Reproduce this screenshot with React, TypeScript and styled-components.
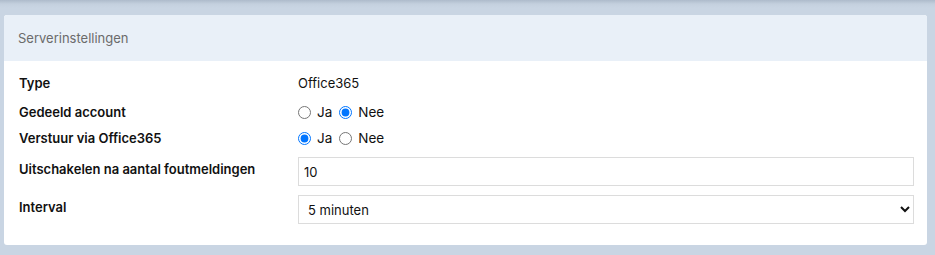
import React from 'react';
import styled, { createGlobalStyle } from 'styled-components';

const GlobalStyle = createGlobalStyle`
  html, body {
    margin: 0;
    padding: 0;
    background: #c9d5e3;
  }

  body {
    font-family: Inter, "Noto Sans", sans-serif;
    color: #111;
  }
`;

const App: React.FC = () => {
  return (
    <>
      <GlobalStyle />
      <Page>
        <Card>
          <CardHeader>Serverinstellingen</CardHeader>
          <CardBody>
            <Row height={26} gapAfter={3}>
              <Label>Type</Label>
              <Value>Office365</Value>
            </Row>
            <Row height={26}>
              <Label>Gedeeld account</Label>
              <Value>
                <RadioLabel>
                  <Radio type="radio" name="shared" />
                  Ja
                </RadioLabel>
                <RadioLabel>
                  <Radio type="radio" name="shared" defaultChecked />
                  Nee
                </RadioLabel>
              </Value>
            </Row>
            <Row height={26} gapAfter={6}>
              <Label>Verstuur via Office365</Label>
              <Value>
                <RadioLabel>
                  <Radio type="radio" name="via" defaultChecked />
                  Ja
                </RadioLabel>
                <RadioLabel>
                  <Radio type="radio" name="via" />
                  Nee
                </RadioLabel>
              </Value>
            </Row>
            <FieldRow gapAfter={9}>
              <FieldLabel>Uitschakelen na aantal foutmeldingen</FieldLabel>
              <TextInput defaultValue="10" />
            </FieldRow>
            <FieldRow>
              <FieldLabel>Interval</FieldLabel>
              <Select defaultValue="5">
                <option value="1">1 minuut</option>
                <option value="5">5 minuten</option>
                <option value="10">10 minuten</option>
              </Select>
            </FieldRow>
          </CardBody>
        </Card>
      </Page>
    </>
  );
};

export default App;

const Page = styled.div`
  position: relative;
  height: 255px;
  box-sizing: border-box;
  padding: 15px 8px 10px 4px;
  background: linear-gradient(to bottom, #aebbcb 0px, #c4d0de 4px, #c9d5e3 8px);
`;

const Card = styled.div`
  background: #fff;
  border-radius: 3px;
  overflow: hidden;
`;

const CardHeader = styled.div`
  height: 46px;
  display: flex;
  align-items: center;
  padding-left: 14px;
  background: #e9f0f8;
  color: #6b6b6b;
  font-size: 13px;
`;

const CardBody = styled.div`
  padding: 9px 13px 21px 15px;
`;

const Row = styled.div<{ height: number; gapAfter?: number }>`
  display: flex;
  align-items: center;
  height: ${({ height }) => height}px;
  margin-bottom: ${({ gapAfter = 0 }) => gapAfter}px;
`;

const Label = styled.div`
  width: 279px;
  flex: none;
  font-size: 13px;
  font-weight: 600;
`;

const Value = styled.div`
  display: flex;
  align-items: center;
  gap: 7px;
  font-size: 13px;
`;

const RadioLabel = styled.label`
  display: flex;
  align-items: center;
  gap: 6px;
  font-size: 13.5px;
`;

const Radio = styled.input`
  margin: 0;
  width: 13px;
  height: 13px;
  accent-color: #0075ff;
`;

const FieldRow = styled.div<{ gapAfter?: number }>`
  display: flex;
  align-items: flex-start;
  margin-bottom: ${({ gapAfter = 0 }) => gapAfter}px;
`;

const FieldLabel = styled(Label)`
  line-height: 20px;
  padding-top: 2px;
`;

const TextInput = styled.input`
  flex: 1;
  box-sizing: border-box;
  height: 29px;
  padding: 0 5px;
  border: 1px solid #dcdcdc;
  border-radius: 0;
  font-family: Inter, "Noto Sans", sans-serif;
  font-size: 13px;
  color: #111;
  outline: none;
`;

const Select = styled.select`
  flex: 1;
  box-sizing: border-box;
  height: 29px;
  padding: 0 4px 0 5px;
  border: 1px solid #dcdcdc;
  border-radius: 0;
  background: #fff;
  font-family: Inter, "Noto Sans", sans-serif;
  font-size: 13px;
  color: #111;
`;
